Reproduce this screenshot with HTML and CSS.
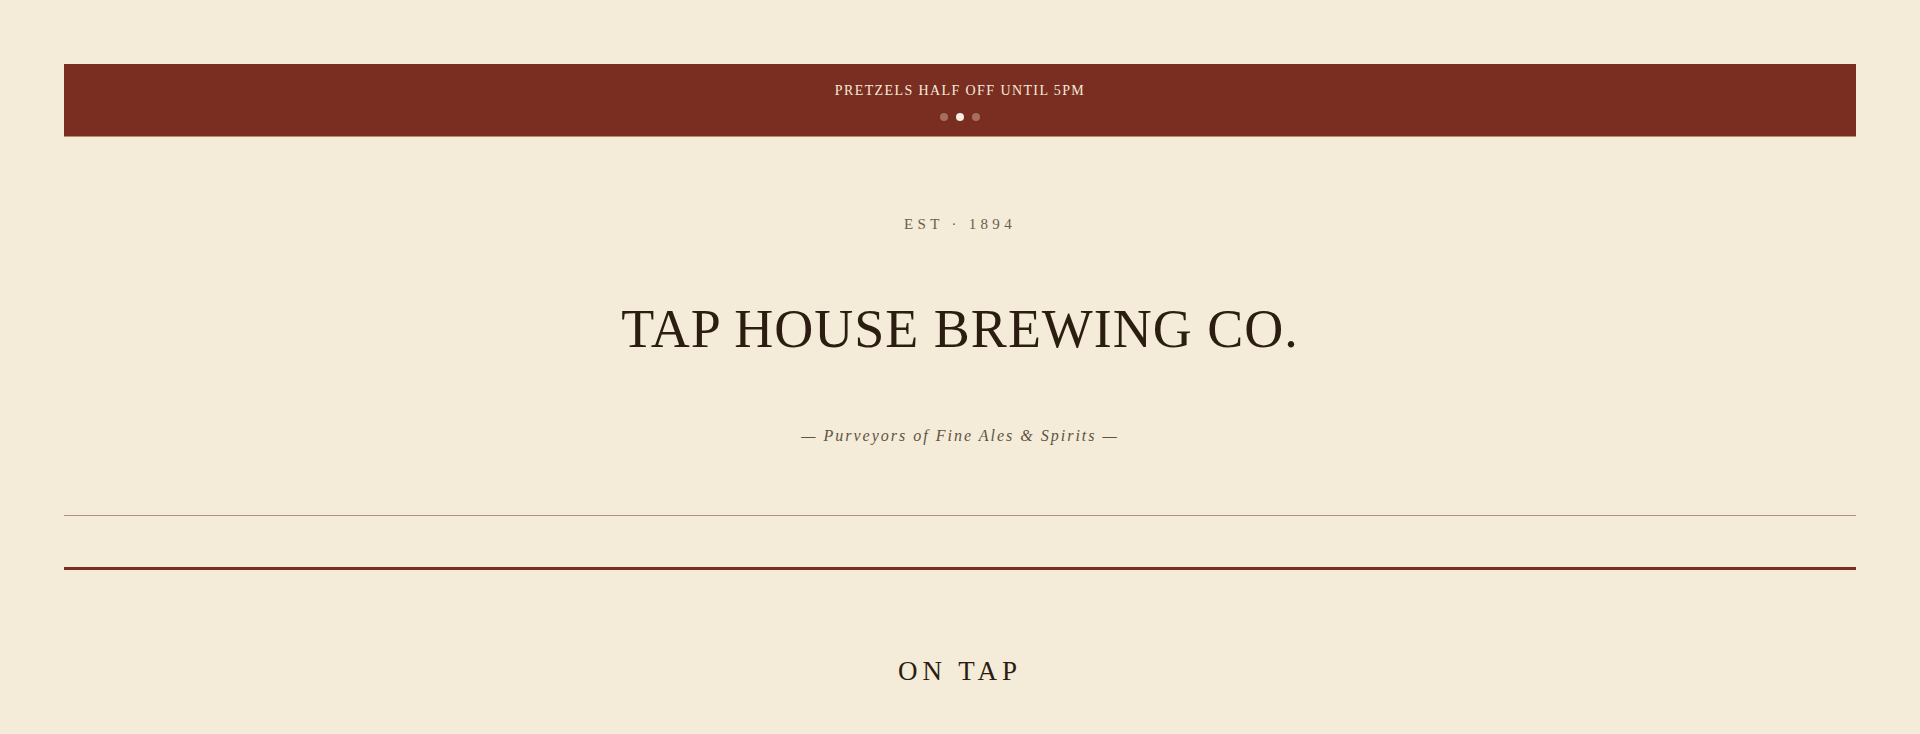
FILE: index.html
```html
<!DOCTYPE html>
<html lang="en">

<head>
  <meta charset="UTF-8">
  <meta name="viewport" content="width=device-width, initial-scale=1.0">
  <title>Tap House Brewing Co.</title>
  <link rel="stylesheet" href="styles.css">
</head>

<body>
  <div class="page">
    <div class="promo">
      <p class="promo-text">Pretzels half off until 5pm</p>
      <div class="dots">
        <span class="dot"></span>
        <span class="dot active"></span>
        <span class="dot"></span>
      </div>
    </div>

    <header class="masthead">
      <p class="est">Est · 1894</p>
      <h1 class="title">Tap House Brewing Co.</h1>
      <p class="tagline">— Purveyors of Fine Ales &amp; Spirits —</p>
    </header>

    <div class="rule"></div>

    <section class="menu">
      <h2 class="menu-title">On Tap</h2>
    </section>
  </div>
</body>

</html>
```

FILE: styles.css
```css
* {
  box-sizing: border-box;
}

body {
  margin: 0;
  background-color: #f4ebd9;
  font-family: "Liberation Serif", "Times New Roman", serif;
  color: #2b1d10;
}

.page {
  padding: 64px 64px 0;
}

.promo {
  background-color: #7a2d21;
  border-bottom: 1px solid #b98a6a;
  padding: 17px 0 15px;
  display: flex;
  flex-direction: column;
  align-items: center;
  gap: 12px;
}

.promo-text {
  margin: 0;
  font-size: 14px;
  line-height: 20px;
  letter-spacing: 1.4px;
  text-transform: uppercase;
  color: #f5ebd8;
}

.dots {
  display: flex;
  gap: 8px;
}

.dot {
  width: 8px;
  height: 8px;
  border-radius: 50%;
  background-color: rgba(245, 235, 216, 0.35);
}

.dot.active {
  background-color: #f8f0e0;
}

.masthead {
  padding-top: 77px;
  padding-bottom: 67px;
  border-bottom: 1px solid #b88d80;
  text-align: center;
}

.est {
  margin: 0;
  font-size: 15px;
  line-height: 20px;
  letter-spacing: 4.3px;
  text-transform: uppercase;
  color: #6b5d4d;
}

.title {
  margin: 63px 0 0;
  font-size: 54px;
  line-height: 64px;
  font-weight: 400;
  letter-spacing: 1px;
  text-transform: uppercase;
  color: #2b1d10;
}

.tagline {
  margin: 63px 0 0;
  font-size: 16px;
  line-height: 24px;
  font-style: italic;
  letter-spacing: 2px;
  color: #5f5444;
}

.rule {
  margin-top: 51px;
  height: 3px;
  background-color: #7a2d21;
}

.menu {
  padding-top: 83px;
  text-align: center;
}

.menu-title {
  margin: 0;
  font-size: 27px;
  line-height: 36px;
  font-weight: 400;
  letter-spacing: 5px;
  text-transform: uppercase;
  color: #2b1d10;
}
```
